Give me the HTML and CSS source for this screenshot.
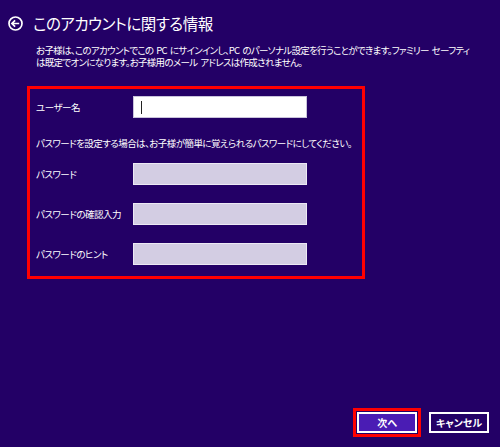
FILE: index.html
```html
<!DOCTYPE html>
<html lang="ja">
<head>
<meta charset="utf-8">
<link rel="stylesheet" href="styles.css">
</head>
<body>
<div class="page">
  <div class="header">
    <svg class="back" width="15" height="15" viewBox="0 0 15 15">
      <circle cx="7.5" cy="7.5" r="6.5" fill="none" stroke="#fff" stroke-width="1.7"/>
      <path d="M3.9 7.5 H11.2 M7.1 4.3 L3.9 7.5 L7.1 10.7" fill="none" stroke="#fff" stroke-width="1.7" stroke-linejoin="miter"/>
    </svg>
    <h1 class="title">このアカウントに関する情報</h1>
  </div>
  <p class="desc"><span class="line">お子様は、このアカウントでこの PC にサインインし、PC のパーソナル設定を行うことができます。ファミリー セーフティ</span><span class="line">は既定でオンになります。お子様用のメール アドレスは作成されません。</span></p>
  <div class="form">
    <div class="row">
      <span class="label">ユーザー名</span>
      <div class="input white"><span class="caret"></span></div>
    </div>
    <p class="hint">パスワードを設定する場合は、お子様が簡単に覚えられるパスワードにしてください。</p>
    <div class="row first">
      <span class="label">パスワード</span>
      <div class="input"></div>
    </div>
    <div class="row">
      <span class="label">パスワードの確認入力</span>
      <div class="input"></div>
    </div>
    <div class="row">
      <span class="label">パスワードのヒント</span>
      <div class="input"></div>
    </div>
  </div>
  <div class="buttons">
    <div class="highlight"><button class="btn primary">次へ</button></div>
    <button class="btn">キャンセル</button>
  </div>
</div>
</body>
</html>
```
FILE: styles.css
```css
html, body {
  margin: 0;
  padding: 0;
  background: #230066;
}
body {
  font-family: "Noto Sans CJK JP", "Noto Sans", sans-serif;
  color: #fff;
  font-feature-settings: "palt";
}
.page {
  width: 500px;
  height: 447px;
  display: flex;
  flex-direction: column;
  box-sizing: border-box;
  overflow: hidden;
}
.header {
  display: flex;
  align-items: center;
  margin-top: 15px;
  padding-left: 8px;
  height: 16px;
}
.back {
  display: block;
  flex: none;
}
.title {
  margin: 0 0 0 10px;
  font-size: 15.5px;
  font-weight: normal;
  line-height: 16px;
  letter-spacing: -0.5px;
}
.desc {
  margin: 13px 0 0 36px;
  font-size: 9.5px;
  line-height: 12px;
  letter-spacing: -0.7px;
  word-spacing: 1.5px;
}
.line {
  display: block;
  white-space: nowrap;
}
.form {
  margin: 18px 0 0 27px;
  width: 338px;
  height: 193px;
  box-sizing: border-box;
  border: 3px solid #ff0000;
  padding: 7px 0 0 6px;
  display: flex;
  flex-direction: column;
}
.row {
  display: grid;
  grid-template-columns: 97px 174px;
  align-items: center;
  height: 22px;
  margin-top: 18px;
}
.row:first-child {
  margin-top: 0;
}
.row.first {
  margin-top: 13px;
}
.label {
  font-size: 9.5px;
  letter-spacing: -0.5px;
  white-space: nowrap;
}
.hint {
  margin: 18px 0 0 0;
  font-size: 9.5px;
  letter-spacing: -0.55px;
  line-height: 14px;
  white-space: nowrap;
}
.input {
  height: 22px;
  box-sizing: border-box;
  background: #d3cde3;
  border: 1px solid #ece9f4;
  position: relative;
}
.input.white {
  background: #fff;
  border: 1px solid #c9c3db;
}
.caret {
  position: absolute;
  left: 7px;
  top: 4px;
  width: 1px;
  height: 13px;
  background: #222;
}
.buttons {
  margin-top: auto;
  margin-bottom: 10px;
  display: flex;
  justify-content: flex-end;
  align-items: center;
  padding-right: 11px;
  gap: 8px;
}
.highlight {
  border: 3px solid #ff0000;
  padding: 1px;
  display: flex;
}
.btn {
  width: 60px;
  height: 21px;
  box-sizing: border-box;
  border: 2px solid #fff;
  background: #230066;
  color: #fff;
  font-family: "Noto Sans CJK JP", "Noto Sans", sans-serif;
  font-feature-settings: "palt";
  font-size: 10px;
  font-weight: bold;
  padding: 0;
  line-height: 17px;
}
.btn.primary {
  background: #4a1cb4;
}
```
